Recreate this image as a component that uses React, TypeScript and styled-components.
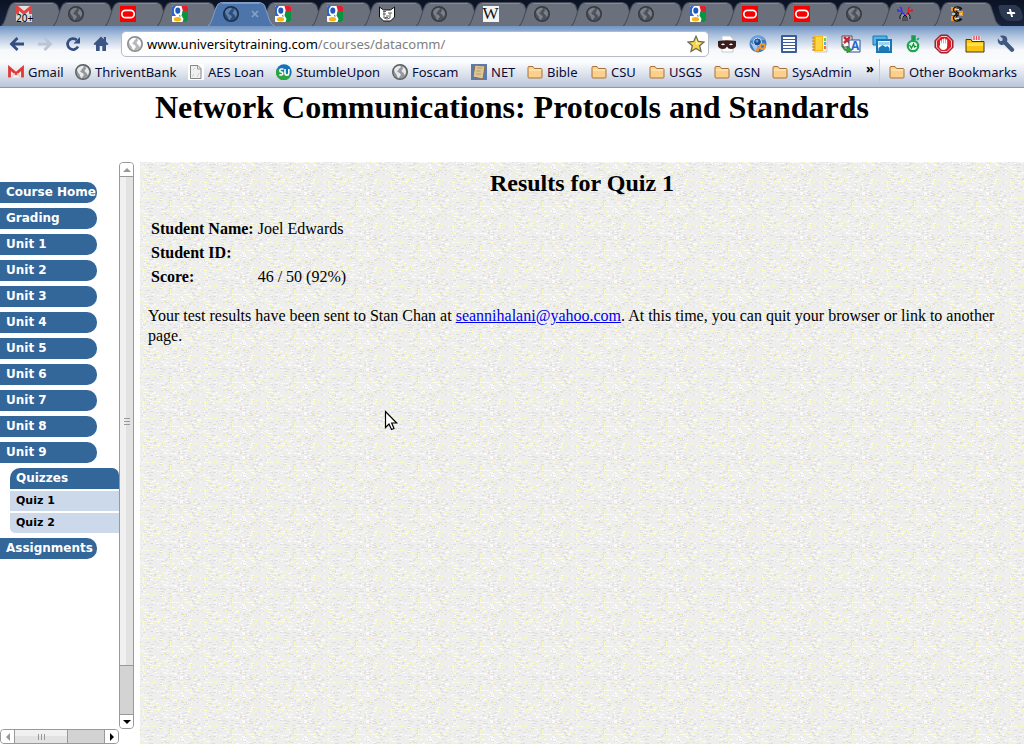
import React from "react";
import styled, { createGlobalStyle } from "styled-components";

const Global = createGlobalStyle`
  * { box-sizing: border-box; }
  body { margin: 0; background: #fff; color: #000; font-family: "Liberation Serif", serif; font-size: 16px; }
  button { font: inherit; color: inherit; border: 0; padding: 0; background: none; }
  svg { display: block; flex: none; }
`;

const ui = `"Noto Sans", "Open Sans", sans-serif`;

const Window = styled.div`
  display: flex;
  flex-direction: column;
  min-height: 100vh;
`;

/* ---------- browser chrome ---------- */

const TabStrip = styled.nav`
  display: flex;
  height: 26px;
  padding: 2px 18px 0 5px;
  background: linear-gradient(#0a1224, #17233c);
`;

const TabButton = styled.button<{ $active?: boolean }>`
  position: relative;
  z-index: ${(p) => (p.$active ? 1 : 0)};
  flex: 1 1 0;
  min-width: 0;
  display: flex;
  align-items: center;
  gap: 12px;
  padding-left: 11px;
  height: 24px;
`;

const TabShape = styled.svg`
  position: absolute;
  left: -4px;
  top: 0;
  width: calc(100% + 15px);
  height: 24px;
`;

const TabIcon = styled.span`
  position: relative;
  display: flex;
`;

const NewTab = styled.button`
  display: flex;
  align-items: center;
  justify-content: center;
  width: 22px;
  height: 16px;
  margin: 3px -16px 0 10px;
  border-radius: 3px 6px 6px 8px;
  background: #2b3850;
  transform: skewX(16deg);
`;

const Chrome = styled.header`
  padding-bottom: 2px;
  border-bottom: 1px solid #8f96c2;
  background: linear-gradient(#7094c4 0, #a9bfdc 9px, #f6f8fb 24px, #fbfcfd 36px, #dde3ec 48px, #b9c5d8 61px);
`;

const Toolbar = styled.div`
  display: flex;
  align-items: center;
  height: 35px;
  padding: 0 8px;
`;

const NavButtons = styled.div`
  display: flex;
  gap: 10px;
  margin-right: 11px;
`;

const ToolButton = styled.button`
  display: flex;
  align-items: center;
  justify-content: center;
  width: 18px;
  height: 20px;
`;

const AddressBar = styled.form`
  flex: 1;
  display: flex;
  align-items: center;
  gap: 4px;
  height: 26px;
  padding: 0 3px 0 5px;
  border: 1px solid #b4bac6;
  border-radius: 5px;
  background: #fff;
`;

const Url = styled.a`
  flex: 1;
  color: #808080;
  font: 13px/20px ${ui};
  text-decoration: none;
`;

const Host = styled.span`
  color: #000;
`;

const Extensions = styled.div`
  display: flex;
  gap: 11px;
  margin-left: 8px;
  & > button { width: 20px; }
`;

const Bookmarks = styled.nav`
  display: flex;
  align-items: center;
  gap: 13px;
  height: 26px;
  margin-top: -2px;
  padding: 0 8px;
  color: #0c0c38;
  font: 13px/18px ${ui};
  white-space: nowrap;
`;

const Bookmark = styled.a<{ $width: number }>`
  display: flex;
  align-items: center;
  gap: 4px;
  width: ${(p) => p.$width}px;
  color: inherit;
  text-decoration: none;
`;

const Overflow = styled.button`
  align-self: flex-start;
  margin-left: auto;
  font-weight: 700;
  color: #000;
`;

const Divider = styled.span`
  width: 1px;
  height: 26px;
  margin-left: -8px;
  margin-right: -4px;
  background: #b8caf4;
`;

/* ---------- page ---------- */

const PageHeader = styled.div`
  height: 74px;
  text-align: center;
`;

const Title = styled.h1`
  margin: 0;
  font-size: 32px;
  line-height: 38px;
`;

const Frames = styled.div`
  flex: 1;
  display: flex;
  gap: 6px;
`;

const SideFrame = styled.aside`
  flex: none;
  display: grid;
  grid-template: 1fr 15px / 119px 15px;
`;

const Menu = styled.ul`
  margin: 0;
  padding: 20px 0 0;
  list-style: none;
  overflow: hidden;
  font-family: "DejaVu Sans", sans-serif;
  font-weight: 700;
`;

const MenuItem = styled.li`
  margin-bottom: 5px;
`;

const Pill = styled.a`
  display: block;
  width: 97px;
  padding-left: 6px;
  border-radius: 0 10px 10px 0;
  background: #336699;
  color: #fff;
  font-size: 12px;
  line-height: 21px;
  text-decoration: none;
  white-space: nowrap;
`;

const SubHead = styled(Pill)`
  width: auto;
  margin-left: 10px;
  border-radius: 10px 7px 0 0;
`;

const SubList = styled.ul`
  margin: 0 0 0 10px;
  padding: 0;
  list-style: none;
`;

const SubLink = styled.a<{ $last?: boolean }>`
  display: block;
  margin-top: 2px;
  padding-left: 6px;
  border-radius: ${(p) => (p.$last ? "0 0 0 5px" : "0")};
  background: #ccd9ea;
  color: #000;
  font-size: 11px;
  line-height: 20px;
  text-decoration: none;
`;

const ScrollBar = styled.div<{ $row?: boolean }>`
  display: flex;
  flex-direction: ${(p) => (p.$row ? "row" : "column")};
  border: 1px solid #999;
  border-radius: 4px;
  background: #d3d3d3;
  overflow: hidden;
`;

const ScrollArrow = styled.button`
  flex: 0 0 13px;
  display: flex;
  align-items: center;
  justify-content: center;
  background: #fff;
`;

const Thumb = styled.div<{ $row?: boolean; $size: number }>`
  flex: ${(p) => p.$size} 1 0;
  display: flex;
  align-items: center;
  justify-content: center;
  border: solid #999;
  border-width: ${(p) => (p.$row ? "0 1px" : "1px 0")};
  background: linear-gradient(${(p) => (p.$row ? "180deg" : "90deg")}, #f0f0f0 50%, #e2e2e2 50%);
`;

const Track = styled.div<{ $row?: boolean; $size: number }>`
  flex: ${(p) => p.$size} 1 0;
  border: solid #999;
  border-width: ${(p) => (p.$row ? "0 1px 0 0" : "0 0 1px")};
`;

const Main = styled.main`
  position: relative;
  flex: 1;
  min-width: 0;
  padding: 7px 8px;
  background: #eeeeed;
`;

const Texture = styled.svg`
  position: absolute;
  inset: 0;
  width: 100%;
  height: 100%;
`;

const Content = styled.div`
  position: relative;
`;

const Subtitle = styled.h2`
  margin: 0 0 19px;
  font-size: 24px;
  line-height: 28px;
  text-align: center;
`;

const Results = styled.table`
  border-spacing: 2px;
  line-height: 20px;
  th { padding: 1px; text-align: left; }
  td { padding: 1px; }
`;

const Message = styled.p`
  margin: 16px 0;
  line-height: 20px;
`;

const MailLink = styled.a`
  color: #0000ee;
`;

const Pointer = styled.svg`
  position: absolute;
  left: 244px;
  top: 248px;
`;

/* ---------- drawings ---------- */

const S = ({ children, w = 16, h = 16 }: { children: React.ReactNode; w?: number; h?: number }) => (
  <svg width={w} height={h} viewBox={`0 0 ${w} ${h}`} aria-hidden="true">
    {children}
  </svg>
);

const Globe = ({ line = "#5c6064", sea = "#94989c", land = "#e8e9ea" }) => (
  <S>
    <circle cx="8" cy="8" r="7.3" fill={sea} stroke={line} strokeWidth="1.4" />
    <path d="M2 6C3 3.500 5 2 7.500 1.800L9 2.500 8.200 4 6.800 4.800 6.500 6.300 5 7 6 8.300 8 9.300 9 11 7.600 12.600 7 14.200 5.500 13 4.600 10.500 3 8.500Z" fill={land} />
    <path d="M10.500 2.800 12.800 4.200 14.100 7 13.600 9.800 12.300 11 11.500 8.800 10 8 9.600 6 11 5Z" fill={land} />
  </S>
);
const DimGlobe = () => <Globe line="#363a42" sea="#4d515a" land="#7b8089" />;
const BlueGlobe = () => <Globe line="#1c2d48" sea="#2f4d75" land="#5d83b4" />;

const Gmail = () => (
  <S>
    <path d="M0 2.500h16v11H0z" fill="#f6eeee" />
    <path d="M1.500 13.500V4L8 9.600 14.500 4v9.500" fill="none" stroke="#dc3a38" strokeWidth="2.800" />
    <path d="M3.500 13 7 9M12.500 13 9 9" stroke="#e8b0ae" />
  </S>
);
const Badge = styled.span`
  position: absolute;
  left: 0;
  top: 6px;
  color: #000;
  font: 10px/12px ${ui};
`;
const GmailTab = () => (
  <>
    <S>
      <path d="M0 0h16v16H0z" fill="#e4e1e1" />
      <path d="M1.500 8V1.500L8 7l6.500-5.500V8" fill="none" stroke="#e04444" strokeWidth="3" />
      <path d="M0 8h16v8H0z" fill="#d8d6d6" />
    </S>
    <Badge>20+</Badge>
  </>
);
const Oracle = () => (
  <S>
    <path d="M0 0h16v16H0z" fill="#f80000" />
    <rect x="1.800" y="4.300" width="12.400" height="7.400" rx="3.700" fill="none" stroke="#fff" strokeWidth="1.700" />
  </S>
);
const Google = () => (
  <S>
    <rect width="16" height="16" rx="1" fill="#fff" />
    <path d="M1 0h3L2 3v4l2 3H0V1z" fill="#2f66c8" />
    <path d="M9.500 0H15q1 0 1 1v4.500h-5z" fill="#e2202c" />
    <path d="M10.500 5H16v10q0 1-1 1h-4.500l1-3-2-3.500z" fill="#0a9440" />
    <ellipse cx="5.800" cy="4.600" rx="2.500" ry="3.200" fill="#2456bd" />
    <path d="M8 8.500 7 10l1.500 1z" fill="#2456bd" />
    <ellipse cx="5.500" cy="13.200" rx="3.600" ry="2.200" fill="#f6b414" />
  </S>
);
const Cat = () => (
  <S>
    <path d="M.5 1v10l4 4h7l4-4V1l-4 3h-7z" fill="#fff" stroke="#111" />
    <path d="M4 5.500h3M9 7h4M4 8h3M5 6v6l3 1 3-1V7M7 10h3M6 11.500h3" fill="none" stroke="#555" strokeWidth=".9" />
  </S>
);
const LetterW = styled.span`
  display: flex;
  justify-content: center;
  width: 16px;
  height: 16px;
  background: #f4f4f4;
  color: #111;
  font: 17px/16px "Liberation Serif", serif;
`;
const WTab = () => <LetterW>W</LetterW>;
const Bug = () => (
  <S>
    <path d="M4.500 7.500h7l1.500 3-2 4H5l-2-4z" fill="#8f949c" />
    <path d="M1 3v2h3l4 4M3 1l1.500 1.500V5" fill="none" stroke="#3434e8" strokeWidth="1.600" />
    <path d="M15 3v2h-3l-3 4M13 1l-1.500 1.500V5" fill="none" stroke="#e01c28" strokeWidth="1.600" />
    <path d="M5 7 3 10v3M11 7l2 3v3M6 15v-4l2-2 2 2v4M8 9v6" fill="none" stroke="#111" />
  </S>
);
const Swirl = () => (
  <S>
    <path d="M2 1h6v4H2zM9 5h5v5H9zM2 10h6v5H2z" fill="#f29a1c" />
    <path d="M13 3C10-.5 4 .5 4.500 4S8 7 8 8s-4 1-3.500 4.500S10 16 13 13M12 4C10 2 7 2 7 4.500S11 7 11 8s-4 1-4 3.500 3 2.500 5 1" fill="none" stroke="#111" strokeWidth="1.200" />
    <path d="M6 3.500h4M3 8h3M10 8h3M6 12.500h4" stroke="#d8dade" strokeWidth="1.300" />
  </S>
);

const Arrow = ({ color, flip }: { color: string; flip?: boolean }) => (
  <S>
    <path transform={flip ? "matrix(-1 0 0 1 16 0)" : undefined} d="M8.500 2 2.500 8l6 6M3 8h12" fill="none" stroke={color} strokeWidth="2.800" />
  </S>
);
const Reload = () => (
  <S>
    <path d="M13 10.500A5.500 5.500 0 1 1 11.800 4" fill="none" stroke="#344e82" strokeWidth="2.700" />
    <path d="M15 1v6.500H8.500z" fill="#344e82" />
  </S>
);
const Home = () => (
  <S>
    <path d="M8 .5.5 8 2 9.200 3 8.400V15h3.700v-5h2.600v5H13V8.400l1 .8L15.500 8 13 5.500V1h-2.200v2.300z" fill="#3b5484" />
  </S>
);
const Star = () => (
  <S w={18} h={18}>
    <path d="M9 1.300 11.300 6.500 17 7l-4.300 3.800L14 16.500 9 13.500 4 16.500l1.300-5.700L1 7l5.700-.5z" fill="#f9d648" stroke="#6d6a55" strokeWidth="1.300" />
    <path d="m9 3.500 1.500 4 4 .5L9 10z" fill="#fff0a0" />
  </S>
);
const Mask = () => (
  <S w={18} h={18}>
    <path d="M4 1h8l3 3v13H4z" fill="#fff" stroke="#c6c9ce" />
    <path d="M0 6q9-1.500 18 0v5q-1 3-5 3-3 0-4-2.500Q8 14 5 14q-4 0-5-3z" fill="#3a1c1c" />
    <path d="M3 9.500q2-2 4 0-2 1.500-4 0zM11 9.500q2-2 4 0-2 1.500-4 0z" fill="#fff" />
  </S>
);
const Chromium = () => (
  <S w={18} h={18}>
    <circle cx="9" cy="9" r="8.500" fill="#3f7ac2" />
    <path d="M1 6a9 9 0 0 1 16-1L9 5z" fill="#6ba0d8" />
    <path d="M1 7l5 9 3-4z" fill="#a9c8ea" />
    <circle cx="8.500" cy="7" r="4" fill="#174a96" stroke="#cfe0f4" strokeWidth="1" />
    <circle cx="8" cy="6" r="1.500" fill="#5c9be0" />
    <path d="M11 12 6 16.500M8 14.500l1.500 1.500" stroke="#f09a34" strokeWidth="1.800" />
    <circle cx="13.500" cy="11.500" r="2.400" fill="none" stroke="#f09a34" strokeWidth="2" />
  </S>
);
const ListIcon = () => (
  <S w={18} h={20}>
    <rect x="1" y="1" width="16" height="18" rx="1" fill="#3c5c9c" />
    <path d="M3 4h12M3 7h12M3 10h12M3 13h12M3 16h12" stroke="#fff" strokeWidth="2" shapeRendering="crispEdges" />
  </S>
);
const Notebook = () => (
  <S w={18} h={18}>
    <path d="M4 1h12v16H4z" fill="#f2f2f2" stroke="#c9c9c9" />
    <path d="M2 1h10v15H2z" fill="#fbb918" />
    <path d="M5 2h6v13H5z" fill="#ffd640" />
    <path d="M1 3h3M1 6h3M1 9h3M1 12h3M1 15h3" stroke="#bf8a28" />
    <path d="M13 7h2v3h-2z" fill="#58b0e8" />
    <path d="M13 11h2v3h-2z" fill="#f07030" />
    <path d="M13 3h2v3h-2z" fill="#7cc840" />
  </S>
);
const Glyph = styled.span`
  position: absolute;
  left: 10px;
  top: 4px;
  color: #2c68c8;
  font: 700 12px/14px ${ui};
`;
const Translate = () => (
  <TabIcon>
    <S w={20} h={18}>
      <path d="M1 1h10v11H1z" fill="#fff" stroke="#55484c" />
      <path d="m3 2 6 6M9 2 3 8" stroke="#c8283c" strokeWidth="2.500" />
      <path d="M8 5h11v12H8z" fill="#f3f8ff" stroke="#314d94" />
      <path d="M2 9c0 4 2 5 4 5v-3l5 4-5 3v-2c-3 0-5-3-4-7z" fill="#32a83c" stroke="#176824" strokeWidth=".6" />
    </S>
    <Glyph>A</Glyph>
  </TabIcon>
);
const Photos = () => (
  <S w={20} h={18}>
    <path d="M1 1h14v9H1z" fill="#55b4e4" stroke="#1775b4" />
    <path d="M5 5h14v12H5z" fill="#e9f6ff" stroke="#1775b4" strokeWidth="2" />
    <path d="M6.500 13l4-3 3 2 2-1 2 2v3h-11z" fill="#1b7bb8" />
    <path d="M6.500 7h11v3h-11z" fill="#9bd2ee" />
  </S>
);
const Stopwatch = () => (
  <S w={18} h={18}>
    <path d="M8 1h3v4H8zM13 5l2-2" fill="#1e9c4c" stroke="#1e9c4c" strokeWidth="1.500" />
    <circle cx="9" cy="11" r="5.200" fill="#e8fff0" stroke="#1ba850" strokeWidth="2.200" />
    <path d="m5.500 10 2 3 2-4 1 3 2-1" fill="none" stroke="#138a3c" strokeWidth="1.300" />
  </S>
);
const StopHand = () => (
  <S w={20} h={20}>
    <path d="M6.500 1h7L19 6.500v7L13.500 19h-7L1 13.500v-7z" fill="#d81c28" stroke="#74242c" />
    <path d="M7 2.500h6l4.500 4.500v6L13 17.500H7L2.500 13V7z" fill="none" stroke="#f6c8ca" />
    <path d="M6 11V6.500h1.500V9.500h.4V5h1.500v4.500h.4V4.500h1.500v5h.4V5.500h1.500V12c0 3-2 4-4 4s-3.500-2-4-3.500z" fill="#fff" />
  </S>
);
const RedFolder = () => (
  <S w={20} h={18}>
    <path d="M7 .5h9V9H7z" fill="#fff" stroke="#c6b6b6" />
    <path d="M9 1v4M11.500 1v4M14 1v4" stroke="#e25464" strokeWidth="1.500" />
    <path d="M1 4.500h5l1 2h12v10.500H1z" fill="#fbc514" stroke="#4a3810" />
    <path d="M2 8h16v3H2z" fill="#ffe04a" />
  </S>
);
const Wrench = () => (
  <S w={18} h={18}>
    <path d="M9 1.500C6.500-.2 3.800.6 3 1l2.800 2.800-.5 2-2 .5L1 3.600C.2 6 1.300 8.800 3.600 9.700c1.200.4 2.400.3 3.300-.1l6.600 6.600a2 2 0 0 0 3-3L10 6.600c.6-2 .3-3.900-1-5.100z" fill="#42597f" />
  </S>
);
const Folder = () => (
  <S>
    <path d="M1 3.500q0-1 1-1h4l1.500 2H14q1 0 1 1V13q0 1-1 1H2q-1 0-1-1z" fill="#fbd08a" stroke="#a8713c" />
    <path d="M1.800 6h12.400" stroke="#fff0cc" />
  </S>
);
const Sheet = () => (
  <S>
    <path d="M0 0h16v16H0z" fill="#fff" />
    <path d="M2.500 1.500H10L13 4.500v10H2.500z" fill="#f0f0f0" stroke="#858585" />
    <path d="M9.500 1.500v3.500H13" fill="none" stroke="#999" />
    <path d="M4 13l2-3M9 13l2-4M5 6l2-2" stroke="#ccc" />
  </S>
);
const Stumble = () => (
  <S>
    <circle cx="8" cy="8" r="7.700" fill="#1373b8" />
    <path d="M1 4.500A7.700 7.700 0 0 0 14.500 12.500L9 8z" fill="#2ba443" />
    <path d="M7.500 5H5.300c-2 0-2 3 0 3s2 3 0 3H3.300M9 5v4c0 3 3.800 3 3.800 0V5" fill="none" stroke="#fff" strokeWidth="1.600" />
  </S>
);
const Net = () => (
  <S>
    <path d="M0 0h16v16H0z" fill="#587bb4" />
    <path d="m4 1 10 1-2 13-10-2z" fill="#dcc596" stroke="#8c6e48" />
    <path d="M6 4h5M5.500 7h4M5 10h5" stroke="#b89c6c" />
  </S>
);
const Tri = ({ d, color = "#000" }: { d: string; color?: string }) => <S w={8} h={8}><path d={d} fill={color} /></S>;

/* ---------- background noise ---------- */

const TILE_W = 62;
const TILE_H = 44;

function makeSpecks() {
  let seed = 7;
  const rnd = () => {
    seed = (seed * 16807) % 2147483647;
    return seed / 2147483647;
  };
  const layers = [
    { color: "#dfdfde", count: 170, run: 3 },
    { color: "#fbfbfb", count: 150, run: 3 },
    { color: "#fbfbb4", count: 130, run: 1 },
    { color: "#f6d8d4", count: 9, run: 3 },
  ];
  return layers.map(({ color, count, run }) => {
    let d = "";
    for (let i = 0; i < count; i++) {
      const w = 1 + Math.floor(rnd() * run);
      const x = Math.floor(rnd() * (TILE_W - w + 1));
      const y = Math.floor(rnd() * TILE_H);
      d += `M${x} ${y}h${w}v1h-${w}z`;
    }
    return { color, d };
  });
}
const specks = makeSpecks();

/* ---------- data ---------- */

const tabs: { name: string; icon: React.FC }[] = [
  { name: "Gmail", icon: GmailTab },
  { name: "Page", icon: DimGlobe },
  { name: "Oracle", icon: Oracle },
  { name: "Google", icon: Google },
  { name: "Course", icon: BlueGlobe },
  { name: "Google", icon: Google },
  { name: "Google", icon: Google },
  { name: "Notes", icon: Cat },
  { name: "Page", icon: DimGlobe },
  { name: "Wikipedia", icon: WTab },
  { name: "Page", icon: DimGlobe },
  { name: "Page", icon: DimGlobe },
  { name: "Page", icon: DimGlobe },
  { name: "Google", icon: Google },
  { name: "Oracle", icon: Oracle },
  { name: "Oracle", icon: Oracle },
  { name: "Page", icon: DimGlobe },
  { name: "Bugs", icon: Bug },
  { name: "Site", icon: Swirl },
];

const extensions: { name: string; icon: React.FC }[] = [
  { name: "Incognito", icon: Mask },
  { name: "Passwords", icon: Chromium },
  { name: "List", icon: ListIcon },
  { name: "Notebook", icon: Notebook },
  { name: "Translate", icon: Translate },
  { name: "Photos", icon: Photos },
  { name: "Timer", icon: Stopwatch },
  { name: "Block", icon: StopHand },
  { name: "Files", icon: RedFolder },
  { name: "Settings", icon: Wrench },
];

const bookmarks: { name: string; icon: React.FC; width: number }[] = [
  { name: "Gmail", icon: Gmail, width: 54 },
  { name: "ThriventBank", icon: Globe, width: 100 },
  { name: "AES Loan", icon: Sheet, width: 75 },
  { name: "StumbleUpon", icon: Stumble, width: 103 },
  { name: "Foscam", icon: Globe, width: 66 },
  { name: "NET", icon: Net, width: 43 },
  { name: "Bible", icon: Folder, width: 51 },
  { name: "CSU", icon: Folder, width: 45 },
  { name: "USGS", icon: Folder, width: 52 },
  { name: "GSN", icon: Folder, width: 45 },
  { name: "SysAdmin", icon: Folder, width: 79 },
];

const pages = ["Course Home", "Grading", "Unit 1", "Unit 2", "Unit 3", "Unit 4", "Unit 5", "Unit 6", "Unit 7", "Unit 8", "Unit 9"];

export default function App() {
  return (
    <Window>
      <Global />
      <TabStrip>
        {tabs.map(({ name, icon: Icon }, i) => {
          const active = i === 4;
          return (
            <TabButton key={i} $active={active} aria-label={name}>
              <TabShape viewBox="0 0 66 24" preserveAspectRatio="none">
                <path
                  d="M0 24C5 22 6 4 11 1.500Q12 .5 15 .5H50Q54 .5 56 4L61 19Q63 23 66 24"
                  fill={active ? "#4d75ab" : "#6b717c"}
                  stroke={active ? "#7d9cc6" : "#444a56"}
                />
                <path d="M14 1.500H51" stroke={active ? "#7d9cc6" : "#858b95"} />
              </TabShape>
              <TabIcon><Icon /></TabIcon>
              {active && <TabIcon><S w={8} h={8}><path d="m1 1 6 6M7 1 1 7" stroke="#8ba4c8" strokeWidth="1.500" /></S></TabIcon>}
            </TabButton>
          );
        })}
        <NewTab aria-label="New tab"><S w={10} h={10}><path d="M5 1v8M1 5h8" stroke="#fff" strokeWidth="2" /></S></NewTab>
      </TabStrip>

      <Chrome>
        <Toolbar>
          <NavButtons>
            <ToolButton aria-label="Back"><Arrow color="#344e82" /></ToolButton>
            <ToolButton aria-label="Forward"><Arrow color="#b9c4d6" flip /></ToolButton>
            <ToolButton aria-label="Reload"><Reload /></ToolButton>
            <ToolButton aria-label="Home"><Home /></ToolButton>
          </NavButtons>
          <AddressBar>
            <Globe line="#8a8c8e" sea="#b6b8ba" land="#ffffff" />
            <Url href="#"><Host>www.universitytraining.com</Host>/courses/datacomm/</Url>
            <ToolButton type="button" aria-label="Bookmark this page"><Star /></ToolButton>
          </AddressBar>
          <Extensions>
            {extensions.map(({ name, icon: Icon }) => (
              <ToolButton key={name} aria-label={name}><Icon /></ToolButton>
            ))}
          </Extensions>
        </Toolbar>
        <Bookmarks>
          {bookmarks.map(({ name, icon: Icon, width }) => (
            <Bookmark key={name} href="#" $width={width}><Icon />{name}</Bookmark>
          ))}
          <Overflow>»</Overflow>
          <Divider />
          <Bookmark href="#" $width={127}><Folder />Other Bookmarks</Bookmark>
        </Bookmarks>
      </Chrome>

      <PageHeader>
        <Title>Network Communications: Protocols and Standards</Title>
      </PageHeader>

      <Frames>
        <SideFrame>
          <Menu>
            {pages.map((name) => (
              <MenuItem key={name}><Pill href="#">{name}</Pill></MenuItem>
            ))}
            <MenuItem>
              <SubHead href="#">Quizzes</SubHead>
              <SubList>
                <li><SubLink href="#">Quiz 1</SubLink></li>
                <li><SubLink href="#" $last>Quiz 2</SubLink></li>
              </SubList>
            </MenuItem>
            <MenuItem><Pill href="#">Assignments</Pill></MenuItem>
          </Menu>
          <ScrollBar>
            <ScrollArrow aria-label="Scroll up"><Tri d="M0 6 4 2l4 4z" color="#999" /></ScrollArrow>
            <Thumb $size={491}><S w={6} h={8}><path d="M0 1.500h6M0 4.500h6M0 7.500h6" stroke="#999" /></S></Thumb>
            <Track $size={48} />
            <ScrollArrow aria-label="Scroll down"><Tri d="M0 2h8L4 6z" /></ScrollArrow>
          </ScrollBar>
          <ScrollBar $row>
            <ScrollArrow aria-label="Scroll left"><Tri d="M6 0v8L2 4z" color="#999" /></ScrollArrow>
            <Thumb $row $size={54}><S w={8} h={6}><path d="M1.500 0v6M4.500 0v6M7.500 0v6" stroke="#999" /></S></Thumb>
            <Track $row $size={37} />
            <ScrollArrow aria-label="Scroll right"><Tri d="M2 0v8l4-4z" /></ScrollArrow>
          </ScrollBar>
        </SideFrame>

        <Main>
          <Texture aria-hidden="true" shapeRendering="crispEdges">
            <defs>
              <pattern id="paper" width={TILE_W} height={TILE_H} patternUnits="userSpaceOnUse">
                {specks.map((s) => <path key={s.color} d={s.d} fill={s.color} />)}
              </pattern>
            </defs>
            <rect width="100%" height="100%" fill="url(#paper)" />
          </Texture>
          <Content>
            <Subtitle>Results for Quiz 1</Subtitle>
            <Results>
              <tbody>
                <tr><th scope="row">Student Name:</th><td>Joel Edwards</td></tr>
                <tr><th scope="row">Student ID:</th><td /></tr>
                <tr><th scope="row">Score:</th><td>46 / 50 (92%)</td></tr>
              </tbody>
            </Results>
            <Message>
              Your test results have been sent to Stan Chan at <MailLink href="mailto:seannihalani@yahoo.com">seannihalani@yahoo.com</MailLink>. At this time, you can quit your browser or link to another page.
            </Message>
          </Content>
          <Pointer width="14" height="22" viewBox="0 0 14 22" aria-hidden="true">
            <path d="M1.500 1.500v16l3.500-3.500 2.500 5.500 2.500-1-2.300-5.500h5z" fill="#fff" stroke="#000" strokeWidth="1.200" />
          </Pointer>
        </Main>
      </Frames>
    </Window>
  );
}
